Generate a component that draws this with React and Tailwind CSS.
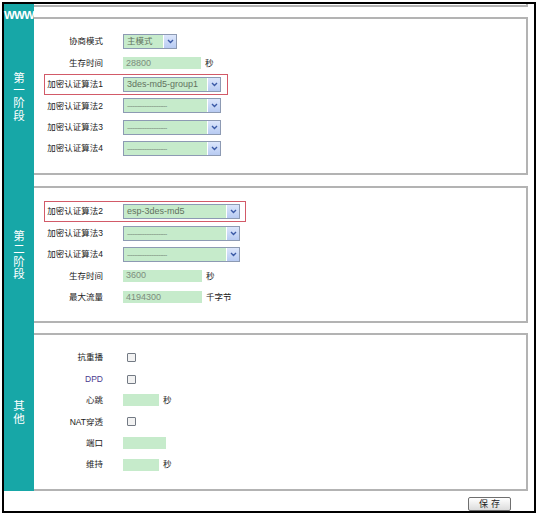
import React from 'react';

const FONT = { fontFamily: '"Liberation Sans", "Noto Sans CJK SC", sans-serif' };

// teal strip on the left edge of every row
function Side({ children, className = '' }) {
  return (
    <div className={`w-[30px] shrink-0 bg-[#17a7a7] text-white flex flex-col items-center ${className}`}>
      {children}
    </div>
  );
}

function VLabel({ chars }) {
  return (
    <div className="flex flex-col items-center text-[11.5px] leading-[13px]" style={{ fontFamily: '"Noto Sans CJK SC", sans-serif' }}>
      {chars.map((c, i) => (
        <span key={i} className="block h-[12.7px] leading-[12.7px]">{c}</span>
      ))}
    </div>
  );
}

function Chevron() {
  return (
    <svg width="7" height="5" viewBox="0 0 7 5" aria-hidden="true">
      <path d="M1 1 L3.5 3.5 L6 1" fill="none" stroke="#3b5aa6" strokeWidth="1.4" />
    </svg>
  );
}

function Select({ value, width }) {
  return (
    <div className="flex h-[15px] border border-[#8d9ab3] bg-[#c6ebcb]" style={{ width }}>
      <div className="flex-1 flex items-center pl-[3px] text-[9px] text-[#62725f] leading-none whitespace-nowrap overflow-hidden">
        {value}
      </div>
      <div className="w-[13px] border-l border-white bg-gradient-to-b from-[#dce6fb] to-[#b8cbf2] flex items-center justify-center">
        <Chevron />
      </div>
    </div>
  );
}

function Dashes({ width }) {
  return <Select width={width} value={<span className="tracking-[-0.6px] text-[#7a8a7a] text-[7px]">-----------------------</span>} />;
}

function Input({ value = '', width }) {
  return (
    <div
      className="h-[12px] bg-[#c6ebcb] flex items-center pl-[3px] text-[9px] text-[#7d8c7d] leading-none"
      style={{ width }}
    >
      {value}
    </div>
  );
}

function Checkbox() {
  return <div className="ml-[4px] w-[9px] h-[9px] border border-[#737a84] bg-[#f2f2f2] rounded-[1px]" />;
}

function Row({ label, labelClass = '', children, unit, highlight, boxWidth }) {
  return (
    <div
      className={`h-[21.4px] ml-[10px] flex items-center border ${highlight ? 'border-[#d25a68]' : 'border-transparent'}`}
      style={{ width: boxWidth }}
    >
      <div className={`ml-[2px] w-[56px] text-right text-[8.5px] whitespace-nowrap leading-none ${labelClass || 'text-[#1a1a1a]'}`}>
        {label}
      </div>
      <div className="ml-[20px] flex items-center gap-[4px]">
        {children}
        {unit && <span className="text-[8.5px] text-[#1a1a1a] leading-none">{unit}</span>}
      </div>
    </div>
  );
}

function Panel({ height, pt, children }) {
  return (
    <div
      className="w-[494px] border-t-2 border-r-2 border-b-2 border-[#b3b3b3] bg-white"
      style={{ height, paddingTop: pt }}
    >
      {children}
    </div>
  );
}

export default function App() {
  return (
    <div className="w-[537px] h-[515px] bg-white pl-[2px] pt-[2px]" style={FONT}>
      <div className="w-[534px] h-[511px] border-2 border-black flex flex-col">
        {/* top strip */}
        <div className="flex h-[13px]">
          <Side className="pt-[6px] overflow-visible relative z-10">
            <span className="text-[11.5px] font-bold leading-none tracking-[-0.8px]">WWW</span>
          </Side>
          <div className="w-[494px] h-[3px] border-b-2 border-r-2 border-[#b3b3b3]" />
        </div>

        {/* 第一阶段 */}
        <div className="flex h-[158px]">
          <Side className="justify-center">
            <VLabel chars={['第', '一', '阶', '段']} />
          </Side>
          <Panel height={158} pt={12}>
            <Row label="协商模式" boxWidth={184}>
              <div className="flex h-[15px] w-[54px] border border-[#8d9ab3] bg-[#c6ebcb]">
                <div className="flex-1 flex items-center pl-[3px] text-[8.5px] text-[#62725f] leading-none">主模式</div>
                <div className="w-[13px] border-l border-white bg-gradient-to-b from-[#dce6fb] to-[#b8cbf2] flex items-center justify-center">
                  <Chevron />
                </div>
              </div>
            </Row>
            <Row label="生存时间" unit="秒" boxWidth={184}>
              <Input value="28800" width={78} />
            </Row>
            <Row label="加密认证算法1" highlight boxWidth={184}>
              <Select value="3des-md5-group1" width={98} />
            </Row>
            <Row label="加密认证算法2" boxWidth={184}>
              <Dashes width={98} />
            </Row>
            <Row label="加密认证算法3" boxWidth={184}>
              <Dashes width={98} />
            </Row>
            <Row label="加密认证算法4" boxWidth={184}>
              <Dashes width={98} />
            </Row>
          </Panel>
        </div>

        <div className="flex h-[11px]">
          <Side />
        </div>

        {/* 第二阶段 */}
        <div className="flex h-[137px]">
          <Side className="justify-center">
            <VLabel chars={['第', '二', '阶', '段']} />
          </Side>
          <Panel height={137} pt={13}>
            <Row label="加密认证算法2" highlight boxWidth={202}>
              <Select value="esp-3des-md5" width={117} />
            </Row>
            <Row label="加密认证算法3" boxWidth={202}>
              <Dashes width={117} />
            </Row>
            <Row label="加密认证算法4" boxWidth={202}>
              <Dashes width={117} />
            </Row>
            <Row label="生存时间" unit="秒" boxWidth={202}>
              <Input value="3600" width={79} />
            </Row>
            <Row label="最大流量" unit="千字节" boxWidth={202}>
              <Input value="4194300" width={79} />
            </Row>
          </Panel>
        </div>

        <div className="flex h-[10px]">
          <Side />
        </div>

        {/* 其他 */}
        <div className="flex h-[158px]">
          <Side className="justify-center">
            <VLabel chars={['其', '他']} />
          </Side>
          <Panel height={158} pt={12}>
            <Row label="抗重播" boxWidth={184}>
              <Checkbox />
            </Row>
            <Row label="DPD" labelClass="text-[#4a3a8e]" boxWidth={184}>
              <Checkbox />
            </Row>
            <Row label="心跳" unit="秒" boxWidth={184}>
              <Input width={36} />
            </Row>
            <Row label="NAT穿透" boxWidth={184}>
              <Checkbox />
            </Row>
            <Row label="端口" boxWidth={184}>
              <Input width={43} />
            </Row>
            <Row label="维持" unit="秒" boxWidth={184}>
              <Input width={36} />
            </Row>
          </Panel>
        </div>

        {/* footer */}
        <div className="flex-1 flex justify-end items-start pt-[6px] pr-[23px]">
          <button
            type="button"
            className="w-[43px] h-[14px] border border-[#6f6f6f] rounded-[2px] bg-gradient-to-b from-white to-[#dcdcdc] text-[9px] leading-none text-[#222] tracking-[3px] pl-[3px]"
          >
            保存
          </button>
        </div>
      </div>
    </div>
  );
}
